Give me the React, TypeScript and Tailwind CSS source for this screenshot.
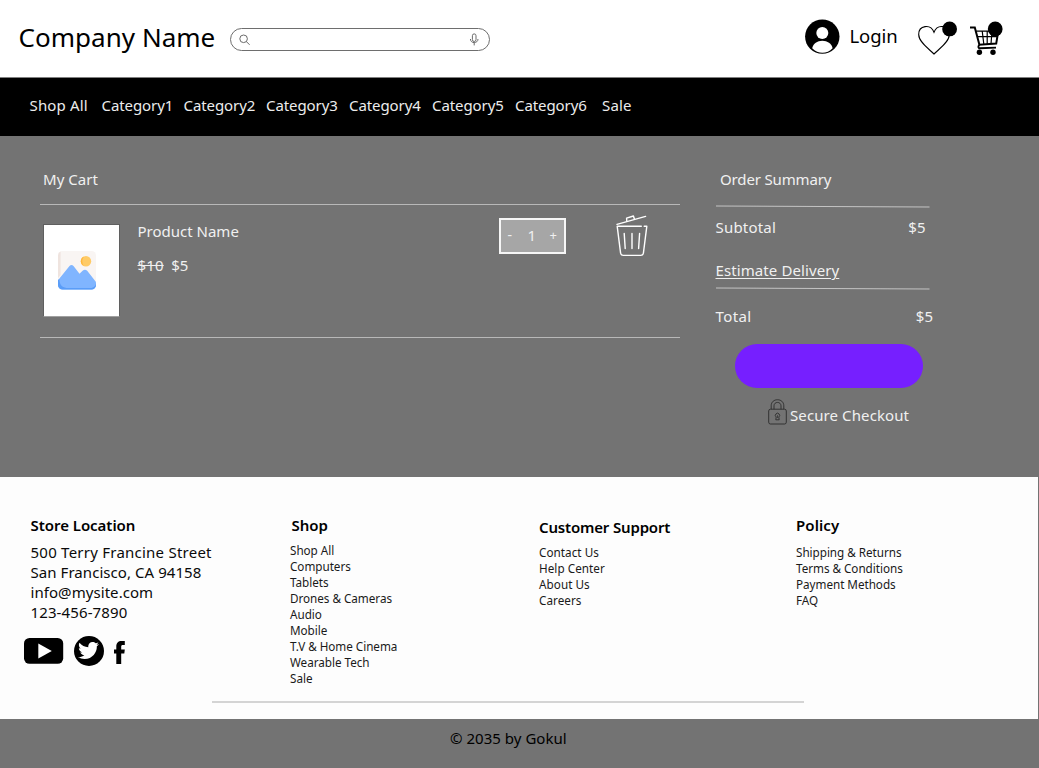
import type { ReactNode } from "react";
import { FaTwitter } from "react-icons/fa";

const navItems: { label: string; className: string }[] = [
  { label: "Shop All", className: "w-[72px] tracking-[0.14px]" },
  { label: "Category1", className: "w-[82px] tracking-[-0.08px]" },
  { label: "Category2", className: "w-[82.5px] tracking-[-0.08px]" },
  { label: "Category3", className: "w-[83px] tracking-[-0.08px]" },
  { label: "Category4", className: "w-[83px] tracking-[-0.08px]" },
  { label: "Category5", className: "w-[83px] tracking-[-0.08px]" },
  { label: "Category6", className: "w-[87px] tracking-[-0.08px]" },
  { label: "Sale", className: "tracking-[0.2px]" },
];

const shopLinks = [
  "Shop All",
  "Computers",
  "Tablets",
  "Drones & Cameras",
  "Audio",
  "Mobile",
  "T.V & Home Cinema",
  "Wearable Tech",
  "Sale",
];
const supportLinks = ["Contact Us", "Help Center", "About Us", "Careers"];
const policyLinks = ["Shipping & Returns", "Terms & Conditions", "Payment Methods", "FAQ"];

function SearchIcon() {
  return (
    <svg width="12" height="12" viewBox="0 0 12 12" fill="none" stroke="#6b6b6b" strokeWidth="1">
      <circle cx="4.6" cy="4.8" r="3.8" />
      <path d="M7.2 7.4 L10.6 10.8" />
    </svg>
  );
}

function MicIcon() {
  return (
    <svg width="10" height="13" viewBox="0 0 10 13" fill="none" stroke="#6b6b6b" strokeWidth="1">
      <rect x="3.4" y="0.9" width="3.6" height="7.6" rx="1.8" />
      <path d="M1.4 6 C1.4 10.8 9 10.8 9 6 M5.2 9.6 V12.4" />
    </svg>
  );
}

function UserIcon() {
  return (
    <svg width="35" height="35" viewBox="0 0 35 35">
      <circle cx="17.3" cy="17.6" r="17.2" fill="#000" />
      <circle cx="17.3" cy="13.9" r="6" fill="#fff" />
      <path d="M7.2 29.2 C8.3 24.6 12.2 21.8 17.3 21.8 C22.4 21.8 26.6 24.6 27.6 29.2 C22 35.2 13 35.2 7.2 29.2 Z" fill="#fff" />
    </svg>
  );
}

function HeartIcon() {
  return (
    <svg width="42" height="36" viewBox="0 0 42 36">
      <path
        d="M16 34 C11 29 0.7 22 0.7 14.4 C0.7 5.2 12.6 3.6 16 12.2 C19.4 3.6 31.3 5.2 31.3 14.4 C31.3 22 21 29 16 34 Z"
        fill="none"
        stroke="#000"
        strokeWidth="1.1"
      />
      <circle cx="31.6" cy="8.9" r="7.4" fill="#000" />
    </svg>
  );
}

function CartIcon() {
  return (
    <svg width="34" height="36" viewBox="0 0 34 36" fill="none" stroke="#000">
      <path d="M0 7.4 H4.8 L9.4 24.8 L26.2 23.6 L28.4 10.4" strokeWidth="2" />
      <path d="M6.2 11.2 H26 M7.6 16.6 H27" strokeWidth="1.3" />
      <path d="M12.2 11 L13.8 24 M17.2 11 V24 M22 11 L21 24" strokeWidth="1.2" />
      <path d="M9.4 24.8 C7.8 26.4 8.2 28.3 9.8 28.3 L26 27.6" strokeWidth="1.9" />
      <circle cx="9.4" cy="32.3" r="2.7" fill="#000" stroke="none" />
      <circle cx="23" cy="32.3" r="2.7" fill="#000" stroke="none" />
      <circle cx="25.2" cy="8.9" r="7.4" fill="#000" stroke="none" />
    </svg>
  );
}

function PictureIcon() {
  return (
    <svg width="38" height="39" viewBox="0 0 38 39">
      <rect x="0" y="0" width="38" height="38.5" rx="4.5" fill="#f9f5f3" />
      <path d="M2.6 0.5 A4.5 4.5 0 0 0 0 4.5 V27 L2.6 24 Z" fill="#efe4df" />
      <circle cx="28" cy="10.2" r="5.2" fill="#ffcb66" />
      <path d="M26 5.4 A5.2 5.2 0 0 0 26 15 A8 8 0 0 1 26 5.4 Z" fill="#ffb63c" />
      <path
        d="M0 29.3 L11.5 15 Q13.5 13 15.5 15 L21.5 22.7 L24.6 19.7 Q27 17.8 29.2 19.8 L37.6 30.6 Q38 31.2 38 32 V34 A4.6 4.6 0 0 1 33.4 38.6 H4.6 A4.6 4.6 0 0 1 0 34 Z"
        fill="#80b5ff"
      />
      <path
        d="M0 29.3 L1.3 27.8 C1.6 33.5 3.5 36.6 8.5 36.9 H33.4 Q36.6 36.6 38 33 V34 A4.6 4.6 0 0 1 33.4 38.6 H4.6 A4.6 4.6 0 0 1 0 34 Z"
        fill="#5a9df8"
      />
    </svg>
  );
}

function TrashIcon() {
  return (
    <svg width="32" height="42" viewBox="0 0 32 42" fill="none" stroke="#fff" strokeWidth="1.4" strokeLinecap="round" strokeLinejoin="round">
      <path d="M1 9.3 L29.6 1.4" />
      <path d="M10.8 6.4 L10.6 3.2 L17.4 1 L18.5 4.2" />
      <path d="M25.3 11.3 H1.2 L4.6 38.2 Q5 40.4 7.2 40.4 H24.8 Q27 40.4 27.4 38.2 L30.8 11.3 H28.2" />
      <path d="M8.2 18.4 L9.2 33.5 M16 18.4 V33.5 M23.6 18.4 L22.6 33.5" />
    </svg>
  );
}

function LockIcon() {
  return (
    <svg width="19" height="26" viewBox="0 0 19 26" fill="none" stroke="#2b2b2b" strokeWidth="0.9">
      <rect x="0.7" y="10.2" width="17.6" height="14.8" rx="1.8" />
      <path d="M3.2 10.2 V6.8 C3.2 -1.3 15.8 -1.3 15.8 6.8 V10.2" />
      <path d="M6 10.2 V6.8 C6 2.3 13 2.3 13 6.8 V10.2" />
      <path d="M8.2 18 A2.1 2.1 0 1 1 10.8 18 L11.2 20.8 H7.8 Z" />
      <path d="M9.5 16.2 V19" strokeWidth="0.7" />
    </svg>
  );
}

function YoutubeIcon() {
  return (
    <svg width="40" height="26" viewBox="0 0 40 26">
      <rect x="0" y="0" width="39.2" height="25.8" rx="5.5" fill="#000" />
      <path d="M14.3 5.4 L27.8 12.9 L14.3 20.6 Z" fill="#fff" />
    </svg>
  );
}

function FacebookIcon() {
  return (
    <svg width="11" height="23" viewBox="0 0 11 23" className="mt-[3px] ml-[10.5px]">
      <path d="M2.3 23 V12.4 H0 V8.6 H2.3 V5.6 C2.3 2 4.2 0 7.6 0 H10.8 V4 H8.8 C7.6 4 7.2 4.6 7.2 5.8 V8.6 H10.8 L10.3 12.4 H7.2 V23 Z" />
    </svg>
  );
}

function Rule() {
  return (
    <svg width="214" height="3" viewBox="0 0 214 3" className="block">
      <path d="M0 1 L213.5 2" stroke="#c4c4c4" strokeWidth="1" />
    </svg>
  );
}

function FooterColumn({
  title,
  links,
  className,
  titleClass,
  listClass,
}: {
  title: string;
  links: string[];
  className: string;
  titleClass: string;
  listClass: string;
}): ReactNode {
  return (
    <div className={className}>
      <h3 className={`text-[15px] leading-5 font-semibold text-black ${titleClass}`}>{title}</h3>
      <ul className={`text-[11.7px] leading-4 text-[#1a1a1a] ${listClass}`}>
        {links.map((link) => (
          <li key={link}>{link}</li>
        ))}
      </ul>
    </div>
  );
}

export default function App() {
  return (
    <div className="flex h-[768px] w-[1039px] flex-col overflow-hidden bg-[#737373] font-['Noto_Sans','Open_Sans',sans-serif] text-[15px] leading-5 whitespace-nowrap">
      <header className="flex h-[78px] shrink-0 items-start border-b border-[#808080] bg-white">
        <h1 className="w-[211px] pt-[17px] pl-[18.5px] text-[26px] leading-10 tracking-[0.03px] text-black">Company Name</h1>
        <div className="mt-[28px] ml-[19px] flex h-[23px] w-[260px] items-center justify-between rounded-full border border-[#6e6e6e] pr-2.5 pl-2">
          <SearchIcon />
          <MicIcon />
        </div>
        <div className="mt-[19px] ml-[315px]">
          <UserIcon />
        </div>
        <span className="mt-[23px] ml-[9.5px] w-[68.5px] text-[18.5px] leading-[26px] tracking-[-0.1px] text-black">Login</span>
        <div className="mt-[20px] w-[52px]">
          <HeartIcon />
        </div>
        <div className="mt-[20px]">
          <CartIcon />
        </div>
      </header>

      <nav className="flex h-[58px] shrink-0 bg-black pt-[17px] pl-[29.5px] text-[#ececec]">
        {navItems.map((item) => (
          <a key={item.label} className={item.className}>
            {item.label}
          </a>
        ))}
      </nav>

      <main className="flex h-[341px] shrink-0 text-[#f0f0f0]">
        <section className="ml-10 w-[639.5px]">
          <h2 className="h-[68px] pt-[33px] pl-[3px] tracking-[0.05px]">My Cart</h2>
          <div className="flex h-[133.5px] border-y border-[#b8b8b8]">
            <div className="mt-[19px] ml-[3px] flex h-[93px] w-[76.5px] items-center justify-center border border-[#5f5f5f] border-b-[#a0a0a0] bg-white pr-[9px]">
              <PictureIcon />
            </div>
            <div className="mt-[16px] ml-[18px] w-[361px]">
              <p>Product Name</p>
              <p className="mt-[14px] flex gap-[7.5px]">
                <s className="tracking-[0.15px]">$10</s>
                <span>$5</span>
              </p>
            </div>
            <div className="mt-[12.5px] flex h-[36.5px] w-[67.5px] items-center justify-between border-2 border-[#f6f6f6] bg-[#a6a6a6] px-[7px] pb-[2px]">
              <button className="text-[14px]">-</button>
              <span className="pl-0.5">1</span>
              <button className="text-[13px]">+</button>
            </div>
            <div className="mt-[10px] ml-[49.5px]">
              <TrashIcon />
            </div>
          </div>
        </section>

        <aside className="ml-9 w-[220px]">
          <h2 className="h-[69px] pt-[33px] pl-[4.5px] tracking-[-0.15px]">Order Summary</h2>
          <Rule />
          <div className="mt-[9px] flex w-[210px] justify-between">
            <span className="tracking-[0.2px]">Subtotal</span>
            <span>$5</span>
          </div>
          <a className="mt-[23px] flex h-[27px] tracking-[0.1px] underline decoration-1 underline-offset-2">Estimate Delivery</a>
          <Rule />
          <div className="mt-[16px] flex w-[217.5px] justify-between">
            <span className="tracking-[0.4px]">Total</span>
            <span>$5</span>
          </div>
          <button className="mt-[18px] ml-[19.5px] block h-[43.5px] w-[188px] rounded-full bg-[#761fff]" aria-label="Checkout" />
          <div className="mt-[11.5px] ml-[52.5px] flex">
            <LockIcon />
            <span className="mt-[6px] ml-[3px] tracking-[0.1px]">Secure Checkout</span>
          </div>
        </aside>
      </main>

      <footer className="flex h-[242.4px] w-[1038px] shrink-0 flex-col bg-[#fdfdfd] text-[#0a0a0a]">
        <div className="flex h-[224px]">
          <div className="w-[290px] pt-[38px]">
            <h3 className="pl-[30.5px] font-semibold tracking-[-0.04px] text-black">Store Location</h3>
            <address className="mt-[8.4px] pl-[30.5px] leading-[19.8px] not-italic">
              <p className="tracking-[0.24px]">500 Terry Francine Street</p>
              <p className="tracking-[0.06px]">San Francisco, CA 94158</p>
              <p className="tracking-[0.06px]">info@mysite.com</p>
              <p className="tracking-[0.12px]">123-456-7890</p>
            </address>
            <div className="mt-[13.4px] flex items-center pl-[24px] text-black">
              <YoutubeIcon />
              <span className="ml-[9.5px] flex size-[30px] items-center justify-center rounded-full bg-black text-[#fdfdfd]">
                <FaTwitter size={21} />
              </span>
              <FacebookIcon />
            </div>
          </div>
          <FooterColumn
            title="Shop"
            links={shopLinks}
            className="w-[249px] pt-[38px]"
            titleClass="pl-[1.5px] tracking-[0px]"
            listClass="mt-[7px] tracking-[-0.03px]"
          />
          <FooterColumn
            title="Customer Support"
            links={supportLinks}
            className="w-[257px] pt-[40px]"
            titleClass="tracking-[-0.17px]"
            listClass="mt-[7px] tracking-[0.05px]"
          />
          <FooterColumn
            title="Policy"
            links={policyLinks}
            className="pt-[38px]"
            titleClass="tracking-[0.1px]"
            listClass="mt-[9px] tracking-[-0.03px]"
          />
        </div>
        <div className="ml-[212px] h-[1.5px] w-[592px] bg-[#d4d4d4]" />
      </footer>

      <p className="pt-[9px] pl-[450px] tracking-[0.03px] text-black">© 2035 by Gokul</p>
    </div>
  );
}
